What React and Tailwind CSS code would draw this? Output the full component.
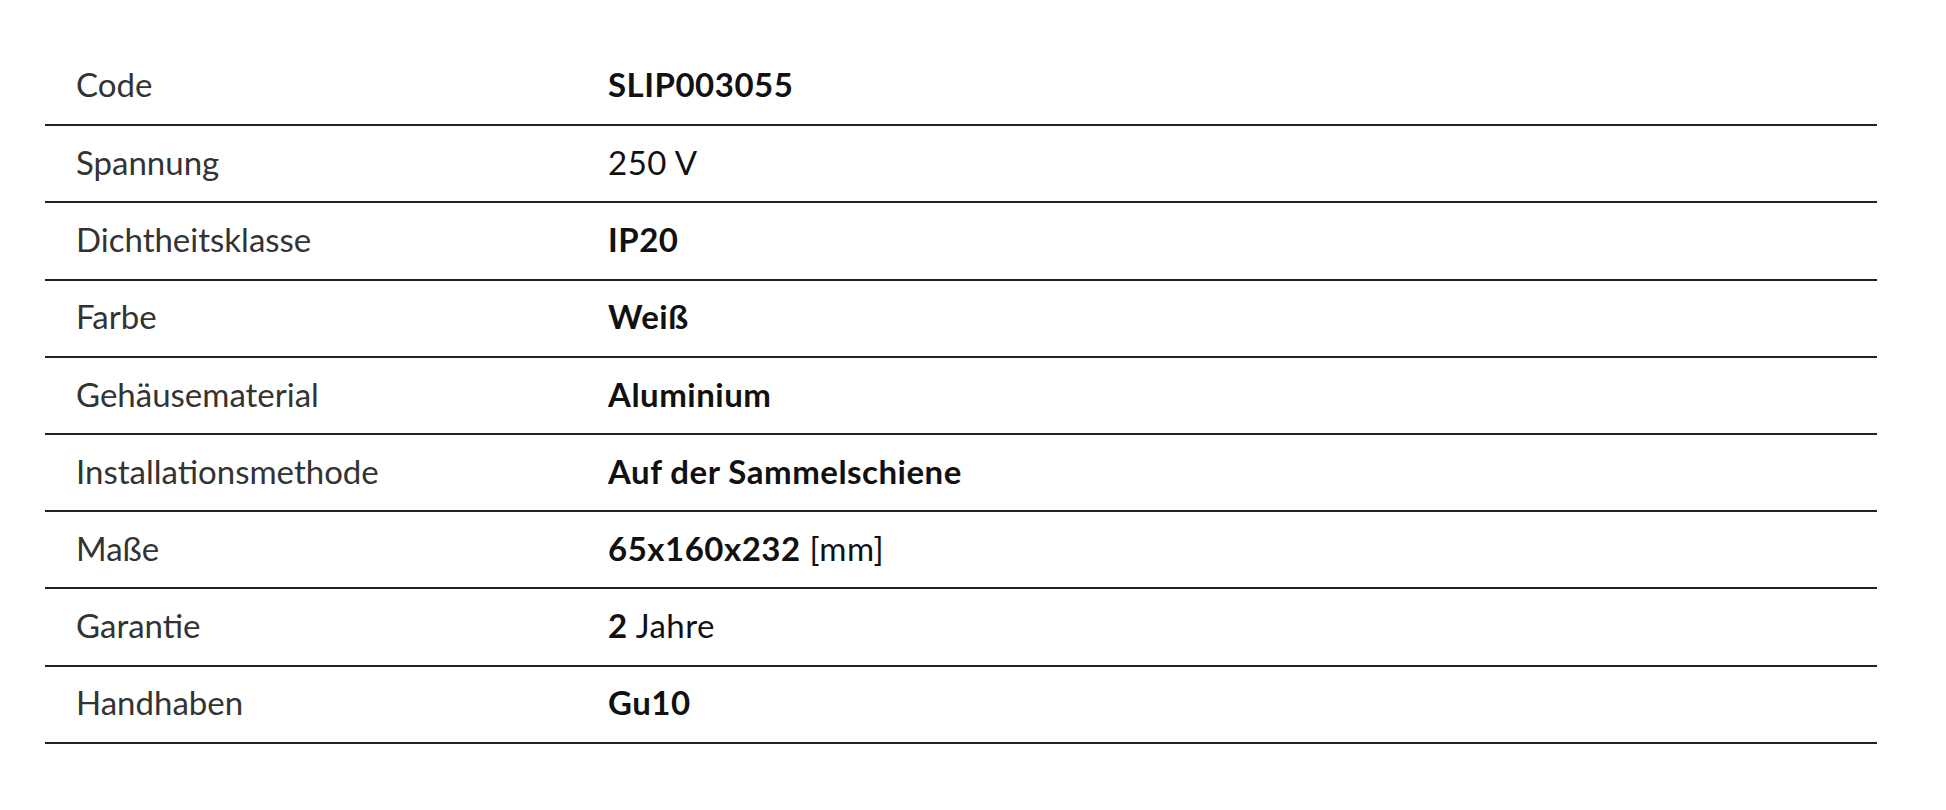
const rows = [
  { label: 'Code', value: <strong className="font-bold">SLIP003055</strong> },
  { label: 'Spannung', value: '250 V' },
  { label: 'Dichtheitsklasse', value: <strong className="font-bold">IP20</strong> },
  { label: 'Farbe', value: <strong className="font-bold">Weiß</strong> },
  { label: 'Gehäusematerial', value: <strong className="font-bold">Aluminium</strong> },
  { label: 'Installationsmethode', value: <strong className="font-bold">Auf der Sammelschiene</strong> },
  {
    label: 'Maße',
    value: (
      <>
        <strong className="font-bold">65x160x232</strong> [mm]
      </>
    ),
  },
  {
    label: 'Garantie',
    value: (
      <>
        <strong className="font-bold">2</strong> Jahre
      </>
    ),
  },
  { label: 'Handhaben', value: <strong className="font-bold">Gu10</strong> },
];

export default function App() {
  return (
    <div className="min-h-screen bg-white pt-[48px] font-['Lato',sans-serif]">
      <table className="ml-[45px] w-[1832px] border-collapse">
        <tbody>
          {rows.map((row) => (
            <tr key={row.label} className="h-[77.2px] border-b-2 border-[#222]">
              <td className="w-[563px] pl-[31px] pb-[2px] align-middle text-[33px] font-normal text-[#333]">
                {row.label}
              </td>
              <td className="pb-[2px] align-middle text-[33px] tracking-[0.5px] text-[#111]">{row.value}</td>
            </tr>
          ))}
        </tbody>
      </table>
    </div>
  );
}
